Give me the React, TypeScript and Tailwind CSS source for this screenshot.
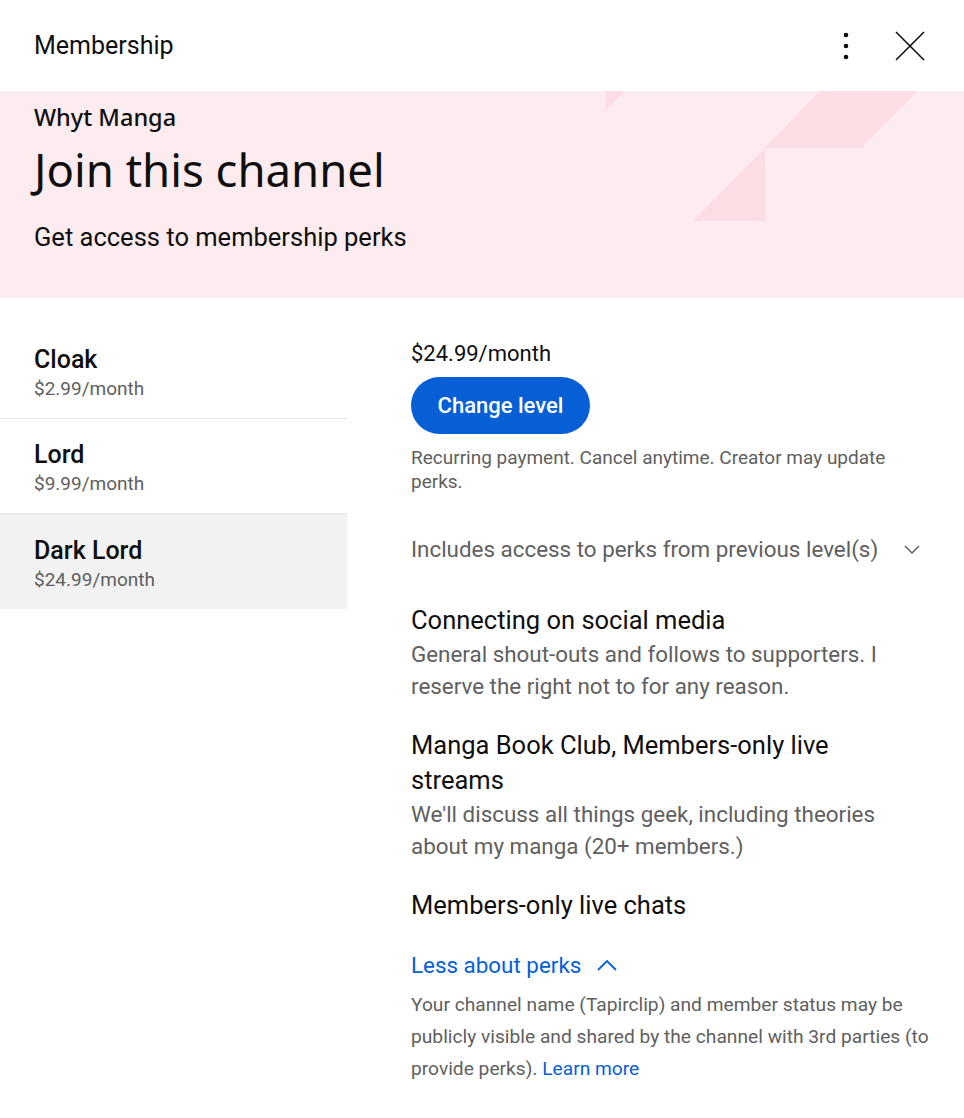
import React from 'react';

const levels = [
  { name: 'Cloak', price: '$2.99/month' },
  { name: 'Lord', price: '$9.99/month' },
  { name: 'Dark Lord', price: '$24.99/month', active: true },
];

const perks = [
  {
    title: 'Connecting on social media',
    desc: 'General shout-outs and follows to supporters. I reserve the right not to for any reason.',
  },
  {
    title: 'Manga Book Club, Members-only live streams',
    desc: "We'll discuss all things geek, including theories about my manga (20+ members.)",
  },
  { title: 'Members-only live chats' },
];

const App: React.FC = () => {
  return (
    <div className="min-h-screen w-[964px] bg-white font-['Roboto','Liberation_Sans',sans-serif] text-[#0f0f0f]">
      {/* header */}
      <div className="flex h-[91px] items-center justify-between pl-[34px] pr-[39px]">
        <div className="text-[25px] leading-[32px]">Membership</div>
        <div className="flex items-center gap-[45px]">
          <svg width="8" height="28" viewBox="0 0 8 28">
            <circle cx="4" cy="3" r="2.3" fill="#0f0f0f" />
            <circle cx="4" cy="14" r="2.3" fill="#0f0f0f" />
            <circle cx="4" cy="25" r="2.3" fill="#0f0f0f" />
          </svg>
          <svg width="30" height="30" viewBox="0 0 30 30" fill="none" stroke="#0f0f0f" strokeWidth="1.6">
            <path d="M1 1L29 29M29 1L1 29" />
          </svg>
        </div>
      </div>

      {/* banner */}
      <div className="relative h-[207px] overflow-hidden bg-[#fdecef] px-[34px] pt-[12px]">
        <svg className="absolute left-0 top-0" width="964" height="207" viewBox="0 0 964 207">
          <polygon points="606,0 625,0 606,19" fill="#fcdde3" />
          <polygon points="820,0 918,0 861,57 765,57" fill="#fcdde3" />
          <polygon points="765,57 765,130 693,130" fill="#fcdde3" />
        </svg>
        <div className="relative">
          <div className="font-['Noto_Sans',sans-serif] text-[23.5px] font-medium leading-[28px]">Whyt Manga</div>
          <div className="mt-[10px] font-['Noto_Sans',sans-serif] text-[45.5px] leading-[56px]">Join this channel</div>
          <div className="mt-[24px] text-[25.5px] leading-[32px]">Get access to membership perks</div>
        </div>
      </div>

      {/* body */}
      <div className="flex gap-[64px] pb-[40px]">
        <div className="w-[347px] shrink-0 pt-[26px]">
          {levels.map((l, i) => (
            <div
              key={l.name}
              className={
                'flex h-[95px] flex-col justify-center px-[34px] pt-[5px] ' +
                (i < levels.length - 1 ? 'border-b border-[#e5e5e5] ' : '') +
                (l.active ? 'bg-[#f2f2f2]' : '')
              }
            >
              <div className="text-[25px] font-medium leading-[31px]">{l.name}</div>
              <div className="text-[19px] leading-[28px] text-[#606060]">{l.price}</div>
            </div>
          ))}
        </div>

        <div className="w-[519px] pt-[42px]">
          <div className="text-[22px] leading-[28px]">$24.99/month</div>
          <button className="mt-[9px] flex h-[57px] w-[179px] items-center justify-center rounded-full bg-[#065fd4] text-[22px] font-medium text-white">
            Change level
          </button>
          <div className="mt-[12px] text-[19px] leading-[24px] text-[#606060]">
            Recurring payment. Cancel anytime. Creator may update perks.
          </div>

          <div className="mt-[39px] flex items-center justify-between text-[22.4px] leading-[32px] text-[#606060]">
            <span>Includes access to perks from previous level(s)</span>
            <svg width="16" height="9" viewBox="0 0 16 9" fill="none" stroke="#606060" strokeWidth="1.5" className="mr-[10px]">
              <path d="M1 1l7 7 7-7" />
            </svg>
          </div>

          <div className="mt-[38px] flex w-[488px] flex-col gap-[26px]">
            {perks.map((p) => (
              <div key={p.title}>
                <div className="text-[25.5px] leading-[35px]">{p.title}</div>
                {p.desc && <div className="text-[22.4px] leading-[32px] text-[#606060]">{p.desc}</div>}
              </div>
            ))}
          </div>

          <button className="mt-[26px] flex items-center gap-[16px] text-[22.4px] leading-[32px] text-[#065fd4]">
            <span>Less about perks</span>
            <svg width="20" height="11" viewBox="0 0 20 11" fill="none" stroke="#065fd4" strokeWidth="1.8">
              <path d="M1 10l9-9 9 9" />
            </svg>
          </button>
          <div className="mt-[8px] text-[19.2px] leading-[32px] text-[#606060]">
            Your channel name (Tapirclip) and member status may be publicly visible and shared by the channel with 3rd
            parties (to provide perks). <span className="text-[#065fd4]">Learn more</span>
          </div>
        </div>
      </div>
    </div>
  );
};

export default App;
